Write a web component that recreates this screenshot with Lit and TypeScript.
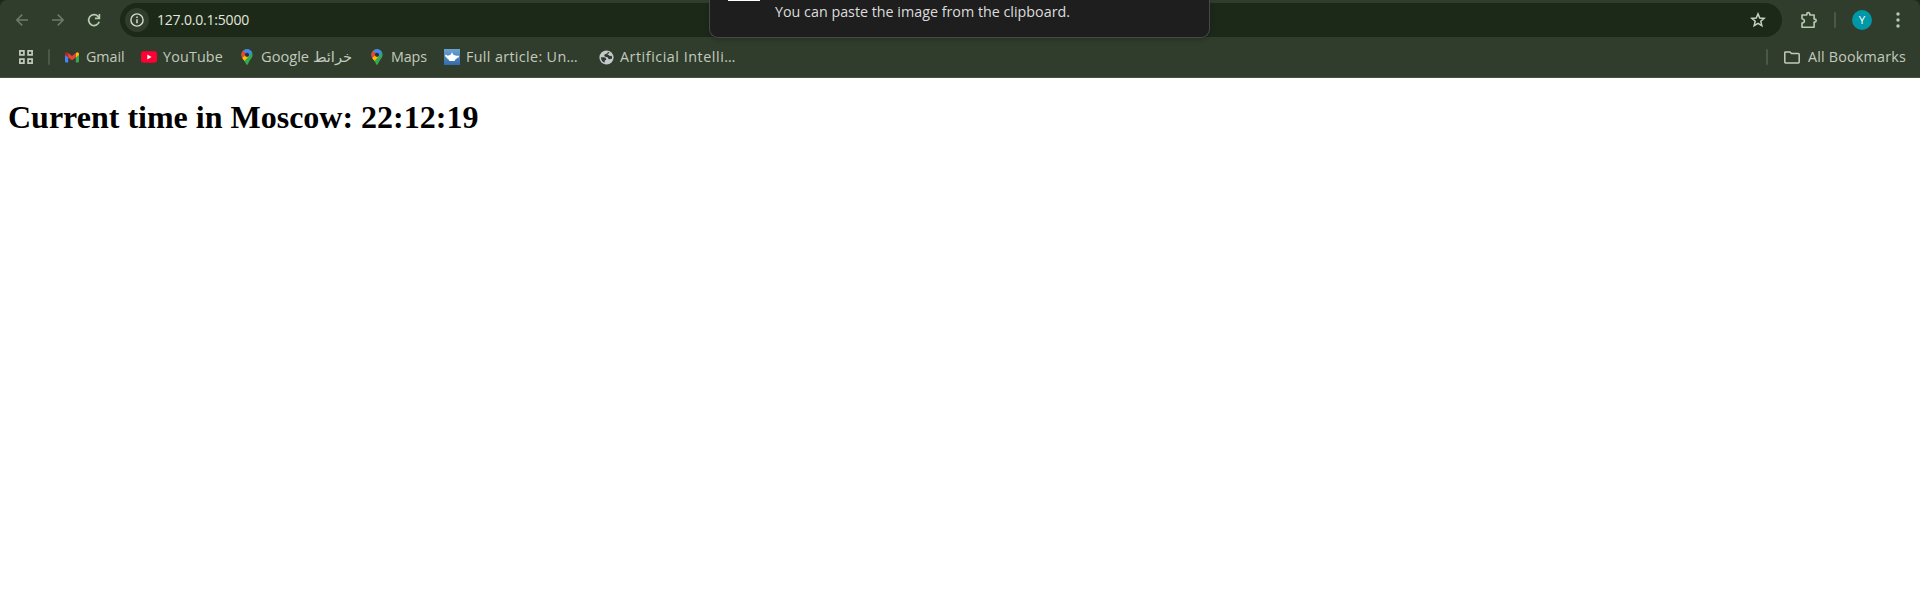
import { LitElement, html, css, svg } from "lit";
import { customElement, property } from "lit/decorators.js";

// One line of interface text, tracked so that it fills its assigned width.
@customElement("fit-label")
class FitLabel extends LitElement {
  @property() text = "";
  @property({ type: Number }) width = 0;

  static styles = css`
    :host { display: block; flex: none; white-space: pre; }
    .text { display: inline-block; white-space: pre; transform-origin: 0 50%; }
  `;

  firstUpdated() {
    const el = this.renderRoot.querySelector(".text") as HTMLElement;
    const natural = el.getBoundingClientRect().width;
    if (/[\u0600-\u06ff]/.test(this.text)) {
      el.style.transform = `scaleX(${this.width / natural})`;
    } else {
      el.style.letterSpacing = `${(this.width - natural) / this.text.length}px`;
    }
  }

  render() {
    return html`<div style="width:${this.width}px"><span class="text">${this.text}</span></div>`;
  }
}

const gmail = html`<svg width="14" height="11" viewBox="0 0 14 11">
  <path d="M0 2v7.5q0 1 1 1h2.2V4z" fill="#4285f4"/>
  <path d="M14 2v7.5q0 1-1 1h-2.2V4z" fill="#34a853"/>
  <path d="M0 2.2Q0 .3 1.6.3 2.2.3 3.2 1v4.4L0 3z" fill="#c5221f"/>
  <path d="M14 2.2Q14 .3 12.4.3q-.6 0-1.6.7v4.4L14 3z" fill="#fbbc04"/>
  <path d="M3.2 1 7 3.9 10.8 1v4.4L7 8.3 3.2 5.4z" fill="#ea4335"/></svg>`;

const youtube = html`<svg width="16" height="12" viewBox="0 0 16 12">
  <rect y=".3" width="16" height="11.4" rx="2.4" fill="#ff0033"/>
  <path d="M6.3 3.6 10.6 6 6.3 8.4z" fill="#fff"/></svg>`;

const pin = (id: string) => html`<svg width="12" height="16" viewBox="0 0 12 16">
  <defs><clipPath id=${id}><path d="M6 .2C2.7.2.4 2.7.4 5.8c0 3.4 3 4.7 4.4 8.8.3.8.6 1.2 1.2 1.2s.9-.4 1.2-1.2c1.4-4.1 4.4-5.4 4.4-8.8C11.6 2.7 9.3.2 6 .2z"/></clipPath></defs>
  <g clip-path="url(#${id})">
    <rect width="12" height="16" fill="#34a853"/>
    <path d="M0 10.5 6 4l2 3-6.4 7L0 13z" fill="#fbbc04"/>
    <path d="M2 1.500 4 0h8v2.500L7.500 7.500 6 5.800z" fill="#4285f4"/>
    <path d="M2.100 1.600 6 5.600 1.500 10.300-1 8V2z" fill="#ea4335"/>
    <path d="M.8 9.500 4.400 5.900 6.800 7.800 2.700 12z" fill="#fbbc04"/>
  </g><circle cx="6" cy="5.800" r="2.100" fill="#27352a"/></svg>`;

const lamp = html`<svg width="16" height="16" viewBox="0 0 16 16">
  <defs><linearGradient id="sky" x2="0" y2="1"><stop stop-color="#6da3d2"/><stop offset="1" stop-color="#316ba9"/></linearGradient></defs>
  <rect width="16" height="16" fill="url(#sky)"/>
  <path d="M1 5.800q1.500-.5 2.600 1L6 6.100q.9-.3 1.300-1.300V3.700h1.400v1.100q.4 1 1.300 1.300l2.400.7h2.700q.4 1.700-2 2.200-.8 1.300-2.300 1.900v1H5.200v-1Q3.700 10.300 3 8.900 1.200 8.100 1 5.800z" fill="#fff"/></svg>`;

const globe = html`<svg width="15" height="15" viewBox="0 0 15 15">
  <circle cx="7.500" cy="7.500" r="7.100" fill="#c4c9cc"/>
  <path d="M8.700 1.900Q9.200 3.500 7.300 3.700 5 4 5.200 5.600q.2 1.400 2.200 1.300 1.500 0 1.700 1.300.3 1.100 1.800.9l2.100-.3q.2-1.700-.3-3.100l-2.100.3q-.6-1.300-2-1.300 0-.8.900-1.100 1-.4.900-1.400z" fill="#303d2d"/>
  <path d="M1.900 7.200h2.900q2.500.2 2.400 2 0 .9-.9 1.100-.7.200-.6 1v1.500Q2.100 11.500 1.900 7.200z" fill="#303d2d"/></svg>`;

const star = html`<svg width="16" height="16" viewBox="0 0 16 16"><path d="M8 1.900 9.750 6l4.450.4-3.400 2.900 1.050 4.400L8 11.400l-3.850 2.300L5.200 9.300 1.800 6.400 6.250 6z" fill="none" stroke="#c9d1c2" stroke-width="1.500"/></svg>`;

const puzzle = html`<svg width="18" height="18" viewBox="0 0 18 18"><path d="M2 4h4.800V3.100a1.500 1.500 0 0 1 3 0V4h4.300v4.100h.6a1.500 1.500 0 0 1 0 3h-.6v5.200H2v-4.200q2.400-.3 2.400-2.100T2 7.800z" fill="none" stroke="#b5ccad" stroke-width="1.600" stroke-linejoin="round"/></svg>`;

const folder = html`<svg width="16" height="13" viewBox="0 0 16 13"><path d="M1.700.9h4.200l1.600 1.700h6.800q.9 0 .9.900v7.500q0 .9-.9.900H1.700q-.9 0-.9-.9V1.800q0-.9.900-.9z" fill="none" stroke="#c3cabd" stroke-width="1.500"/></svg>`;

const arrow = (d: string) => html`<svg width="14" height="14" viewBox="0 0 14 14"><path d=${d} fill="none" stroke="#6f7b69" stroke-width="1.500"/></svg>`;

@customElement("app-root")
class AppRoot extends LitElement {
  static styles = css`
    :host { display: block; position: relative; width: 1920px; height: 597px; overflow: hidden; background: #fff; }
    svg { display: block; flex: none; }
    .chrome { height: 78px; box-sizing: border-box; background: #1d291b; font: 14.300px/20px "Open Sans", "Noto Sans", "DejaVu Sans", sans-serif; color: #c3cabd; }
    .frame { height: 78px; box-sizing: border-box; background: #303d2d; border-radius: 7px 7px 0 0; border-bottom: 1px solid #435040; padding-top: 1px; }
    .toolbar { display: flex; align-items: center; height: 34px; padding: 2px 17px 0 15px; }
    .nav { display: flex; gap: 22px; width: 105px; flex: none; }
    .address { display: flex; align-items: center; height: 34px; flex: none; width: 1662px; box-sizing: border-box; padding: 0 16px 0 5px; border-radius: 17px; background: #1c2919; }
    .info { display: grid; place-items: center; width: 24px; height: 24px; margin-right: 8px; border-radius: 50%; background: #303d2d; }
    .url { font-size: 14px; color: #e2e6dd; }
    .star { margin-left: auto; }
    .actions { display: flex; align-items: center; padding-left: 18px; flex: none; }
    .rule { flex: none; width: 2px; height: 16px; background: #4a5945; border-radius: 1px; }
    .actions .rule { margin: 0 16px 0 16px; }
    .avatar { display: grid; place-items: center; width: 20px; height: 20px; border-radius: 50%; background: #0097a7; color: #fff; font-size: 11.500px; line-height: 20px; }
    .dots { margin-left: 24px; }
    .bookmarks { display: flex; align-items: center; height: 40px; padding: 0 14px 0 19px; }
    .bookmarks .rule { margin: 0 15px; }
    .bookmarks .all .rule { margin-right: 16px; }
    .mark { display: flex; align-items: center; flex: none; }
    .mark svg { margin-right: var(--gap); }
    .all { margin-left: auto; display: flex; align-items: center; }
    .all svg { margin-right: 8px; }
    .toast { position: absolute; left: 709px; top: 0; width: 501px; height: 38px; box-sizing: border-box; display: flex; padding-left: 18px; background: #1e1e1e; border: 1px solid #484848; border-top: 0; border-radius: 0 0 9px 9px; box-shadow: 0 2px 5px #0003; color: #dcdcdc; font: 14.300px/24px "Open Sans", "Noto Sans", sans-serif; }
    .thumb { width: 32px; height: 1px; margin-right: 15px; background: #fff; }
    h1 { margin: 0; padding: 21px 8px; font: bold 32px/37px "Liberation Serif", serif; color: #000; }
  `;

  marks = [
    { icon: gmail, text: "Gmail", width: 38.5, gap: 7, after: 16.5 },
    { icon: youtube, text: "YouTube", width: 60, gap: 6, after: 18 },
    { icon: pin("pinA"), text: "Google خرائط", width: 91, gap: 8, after: 19 },
    { icon: pin("pinB"), text: "Maps", width: 36, gap: 8, after: 17 },
    { icon: lamp, text: "Full article: Un…", width: 112, gap: 6, after: 21 },
    { icon: globe, text: "Artificial Intelli…", width: 116, gap: 6, after: 0 },
  ];

  render() {
    return html`
      <div class="chrome"><div class="frame">
        <div class="toolbar">
          <div class="nav">
            ${arrow("M13 7H2M7.200 1.600 1.800 7l5.400 5.400")}
            ${arrow("M1 7h11M6.800 1.600 12.200 7l-5.400 5.400")}
            <svg width="14" height="14" viewBox="0 0 14 14"><path d="M12.200 8.800A5.400 5.400 0 1 1 11 3.400l1.200 1.400" fill="none" stroke="#b5ccad" stroke-width="1.700"/><path d="M12.400.9V5.300H7.900" fill="none" stroke="#b5ccad" stroke-width="1.700"/></svg>
          </div>
          <div class="address">
            <div class="info"><svg width="14" height="14" viewBox="0 0 14 14"><circle cx="7" cy="7" r="6.100" fill="none" stroke="#d5dccf" stroke-width="1.400"/><path d="M7 6.300v4M7 3.500v1.500" stroke="#d5dccf" stroke-width="1.500"/></svg></div>
            <fit-label class="url" .text=${"127.0.0.1:5000"} .width=${92}></fit-label>
            <div class="star">${star}</div>
          </div>
          <div class="actions">${puzzle}<div class="rule"></div><div class="avatar">Y</div>
            <svg class="dots" width="4" height="16" viewBox="0 0 4 16">${[2, 8, 14].map((y) => svg`<circle cx="2" cy=${y} r="1.700" fill="#b5ccad"/>`)}</svg>
          </div>
        </div>
        <div class="bookmarks">
          <svg width="14" height="14" viewBox="0 0 14 14"><path d="M.9.9h4v4h-4zM9.100.9h4v4h-4zM.9 9.100h4v4h-4zM9.100 9.100h4v4h-4z" fill="none" stroke="#c3cabd" stroke-width="1.700"/></svg>
          <div class="rule"></div>
          ${this.marks.map((m) => html`<div class="mark" style="--gap:${m.gap}px;margin-right:${m.after}px">${m.icon}<fit-label .text=${m.text} .width=${m.width}></fit-label></div>`)}
          <div class="all"><div class="rule"></div>${folder}<fit-label .text=${"All Bookmarks"} .width=${98}></fit-label></div>
        </div>
      </div></div>
      <h1>Current time in Moscow: 22:12:19</h1>
      <div class="toast"><div class="thumb"></div><fit-label .text=${"You can paste the image from the clipboard."} .width=${295}></fit-label></div>
    `;
  }
}
